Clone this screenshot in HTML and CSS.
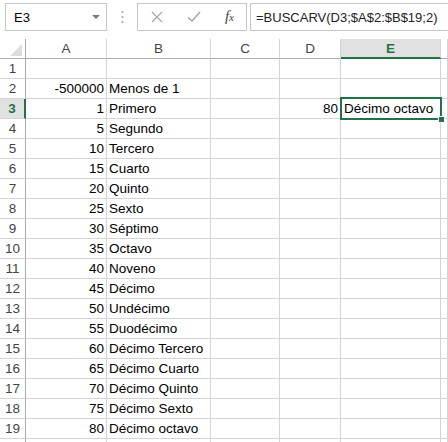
FILE: index.html
```html
<!DOCTYPE html>
<html lang="es">
<head>
    <meta charset="UTF-8">
    <title>Hoja1</title>
    <link rel="stylesheet" href="styles.css">
</head>
<body>
    <div class="toolbar">
        <div class="namebox">
            <span>E3</span>
            <svg class="arrow" width="8" height="4" viewBox="0 0 8 4"><path d="M0 0h8L4 4z" fill="#7a7a7a"/></svg>
        </div>
        <div class="grip">
            <svg width="3" height="12" viewBox="0 0 3 12"><rect x="0.5" y="0" width="2" height="2" fill="#b5b5b5"/><rect x="0.5" y="5" width="2" height="2" fill="#b5b5b5"/><rect x="0.5" y="10" width="2" height="2" fill="#b5b5b5"/></svg>
        </div>
        <div class="fxbtns">
            <svg width="12" height="12" viewBox="0 0 12 12"><path d="M1 1l10 10M11 1L1 11" stroke="#a8a8a8" stroke-width="1.2"/></svg>
            <svg width="14" height="12" viewBox="0 0 14 12"><path d="M1 6.5l4 3.5L13 1" stroke="#a8a8a8" stroke-width="1.6" fill="none"/></svg>
            <span class="fx">f<small>x</small></span>
        </div>
        <div class="formula">=BUSCARV(D3;$A$2:$B$19;2)</div>
    </div>

    <div class="sheet">
        <div class="hd corner"><svg width="12" height="12" viewBox="0 0 12 12"><path d="M12 0V12H0z" fill="#dcdcdc"/></svg></div>
        <div class="hd">A</div>
        <div class="hd">B</div>
        <div class="hd">C</div>
        <div class="hd">D</div>
        <div class="hd on">E</div>
        <div class="hd"></div>

        <div class="rh">1</div><div class="c"></div><div class="c"></div><div class="c"></div><div class="c"></div><div class="c"></div><div class="c"></div>
        <div class="rh">2</div><div class="c n">-500000</div><div class="c">Menos de 1</div><div class="c"></div><div class="c"></div><div class="c"></div><div class="c"></div>
        <div class="rh on">3</div><div class="c n">1</div><div class="c">Primero</div><div class="c"></div><div class="c n">80</div><div class="c active">Décimo octavo<span class="selbox"><span class="handle"></span></span></div><div class="c"></div>
        <div class="rh">4</div><div class="c n">5</div><div class="c">Segundo</div><div class="c"></div><div class="c"></div><div class="c"></div><div class="c"></div>
        <div class="rh">5</div><div class="c n">10</div><div class="c">Tercero</div><div class="c"></div><div class="c"></div><div class="c"></div><div class="c"></div>
        <div class="rh">6</div><div class="c n">15</div><div class="c">Cuarto</div><div class="c"></div><div class="c"></div><div class="c"></div><div class="c"></div>
        <div class="rh">7</div><div class="c n">20</div><div class="c">Quinto</div><div class="c"></div><div class="c"></div><div class="c"></div><div class="c"></div>
        <div class="rh">8</div><div class="c n">25</div><div class="c">Sexto</div><div class="c"></div><div class="c"></div><div class="c"></div><div class="c"></div>
        <div class="rh">9</div><div class="c n">30</div><div class="c">Séptimo</div><div class="c"></div><div class="c"></div><div class="c"></div><div class="c"></div>
        <div class="rh">10</div><div class="c n">35</div><div class="c">Octavo</div><div class="c"></div><div class="c"></div><div class="c"></div><div class="c"></div>
        <div class="rh">11</div><div class="c n">40</div><div class="c">Noveno</div><div class="c"></div><div class="c"></div><div class="c"></div><div class="c"></div>
        <div class="rh">12</div><div class="c n">45</div><div class="c">Décimo</div><div class="c"></div><div class="c"></div><div class="c"></div><div class="c"></div>
        <div class="rh">13</div><div class="c n">50</div><div class="c">Undécimo</div><div class="c"></div><div class="c"></div><div class="c"></div><div class="c"></div>
        <div class="rh">14</div><div class="c n">55</div><div class="c">Duodécimo</div><div class="c"></div><div class="c"></div><div class="c"></div><div class="c"></div>
        <div class="rh">15</div><div class="c n">60</div><div class="c">Décimo Tercero</div><div class="c"></div><div class="c"></div><div class="c"></div><div class="c"></div>
        <div class="rh">16</div><div class="c n">65</div><div class="c">Décimo Cuarto</div><div class="c"></div><div class="c"></div><div class="c"></div><div class="c"></div>
        <div class="rh">17</div><div class="c n">70</div><div class="c">Décimo Quinto</div><div class="c"></div><div class="c"></div><div class="c"></div><div class="c"></div>
        <div class="rh">18</div><div class="c n">75</div><div class="c">Décimo Sexto</div><div class="c"></div><div class="c"></div><div class="c"></div><div class="c"></div>
        <div class="rh">19</div><div class="c n">80</div><div class="c">Décimo octavo</div><div class="c"></div><div class="c"></div><div class="c"></div><div class="c"></div>
        <div class="rh"></div><div class="c"></div><div class="c"></div><div class="c"></div><div class="c"></div><div class="c"></div><div class="c"></div>
    </div>
</body>
</html>
```

FILE: styles.css
```css
body {
    margin: 0;
    width: 448px;
    height: 442px;
    overflow: hidden;
    background: #fff;
    font-family: "Liberation Sans", Arial, sans-serif;
    font-size: 13.5px;
    color: #000;
}

.toolbar {
    height: 39px;
    box-sizing: border-box;
    padding: 3px 0 0 5px;
    display: flex;
    align-items: flex-start;
    font-size: 13px;
}

.namebox,
.fxbtns,
.formula {
    height: 28px;
    box-sizing: border-box;
    border: 1px solid #c6c6c6;
    display: flex;
    align-items: center;
}

.namebox {
    width: 102px;
    padding: 0 6px 0 8px;
    justify-content: space-between;
}

.grip {
    width: 30px;
    height: 28px;
    display: flex;
    align-items: center;
    justify-content: center;
}

.fxbtns {
    width: 110px;
    padding: 0 12px 0 13px;
    justify-content: space-between;
}

.fx {
    font-family: "Liberation Serif", serif;
    font-style: italic;
    font-size: 15px;
    color: #444;
    margin-top: -2px;
}

.fx small {
    font-size: 11px;
}

.formula {
    flex: 1;
    margin-left: 3px;
    margin-right: -3px;
    padding-left: 5px;
    color: #222;
}

.sheet {
    display: grid;
    grid-template-columns: 26px 81px 104px 69px 61px 100px 1fr;
    grid-auto-rows: 20px;
}

.hd,
.rh,
.c {
    box-sizing: border-box;
    border-right: 1px solid #d4d4d4;
    border-bottom: 1px solid #d4d4d4;
    display: flex;
    align-items: flex-end;
    padding-bottom: 2px;
    white-space: nowrap;
}

.hd {
    justify-content: center;
    color: #444;
    border-bottom-color: #ababab;
}

.corner {
    align-items: flex-end;
    justify-content: flex-end;
    padding: 0 3px 2px 0;
    border-right-color: #ababab;
}

.rh {
    justify-content: center;
    color: #444;
    border-right-color: #ababab;
}

.hd.on {
    background: #e1e1e1;
    border-bottom: 2px solid #217346;
    color: #217346;
    font-weight: bold;
    padding-bottom: 1px;
}

.rh.on {
    background: #e1e1e1;
    border-right: 2px solid #217346;
    color: #217346;
    font-weight: bold;
}

.c {
    padding-left: 2px;
    padding-right: 2px;
}

.n {
    justify-content: flex-end;
}

.active {
    position: relative;
    padding-left: 3px;
}

.selbox {
    position: absolute;
    top: -2px;
    left: -1px;
    right: -2px;
    bottom: -2px;
    border: 2px solid #217346;
}

.handle {
    position: absolute;
    right: -5px;
    bottom: -5px;
    width: 5px;
    height: 5px;
    background: #217346;
    border: 1px solid #fff;
}
```
